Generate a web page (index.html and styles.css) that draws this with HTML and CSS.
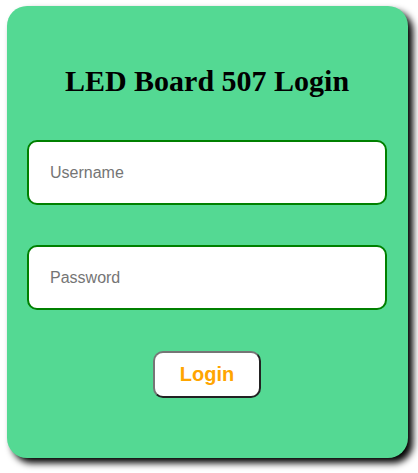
FILE: index.html
```html
<!DOCTYPE html>
<html lang="en">
<head>
<meta charset="utf-8">
<title>LED Board 507 Login</title>
<link rel="stylesheet" href="styles.css">
</head>
<body>
<form class="card">
  <h1 class="title">LED Board 507 Login</h1>
  <input class="field" type="text" placeholder="Username">
  <input class="field field-pass" type="password" placeholder="Password">
  <button class="btn" type="button">Login</button>
</form>
</body>
</html>
```
FILE: styles.css
```css
html, body {
  margin: 0;
  padding: 0;
  background: #ffffff;
}
body {
  min-height: 473px;
  box-sizing: border-box;
  padding: 6px 0 0 7px;
}
.card {
  box-sizing: border-box;
  width: 401px;
  height: 452px;
  margin: 0;
  padding: 57px 21px 0 20px;
  background: #54d993;
  border-radius: 20px;
  box-shadow: 5px 5px 7px #000;
  display: flex;
  flex-direction: column;
  align-items: stretch;
}
.title {
  margin: 0;
  font-family: "Liberation Serif", "Times New Roman", serif;
  font-size: 30px;
  font-weight: bold;
  line-height: 36px;
  text-align: center;
  color: #000;
}
.field {
  box-sizing: border-box;
  height: 65px;
  margin: 41px 0 0 0;
  padding: 0 21px;
  border: 2px solid #008000;
  border-radius: 10px;
  background: #fff;
  font-family: "Liberation Sans", Arial, sans-serif;
  font-size: 16px;
  color: #000;
  outline: none;
}
.field::placeholder {
  color: #757575;
}
.field-pass {
  margin-top: 40px;
}
.btn {
  align-self: center;
  box-sizing: border-box;
  width: 108px;
  height: 47px;
  margin-top: 41px;
  padding: 0;
  background: #fff;
  border: 2px solid;
  border-color: #767676 #222 #222 #767676;
  border-radius: 10px;
  font-family: "Liberation Sans", Arial, sans-serif;
  font-size: 20px;
  font-weight: bold;
  color: #ffa500;
  cursor: pointer;
}
```
